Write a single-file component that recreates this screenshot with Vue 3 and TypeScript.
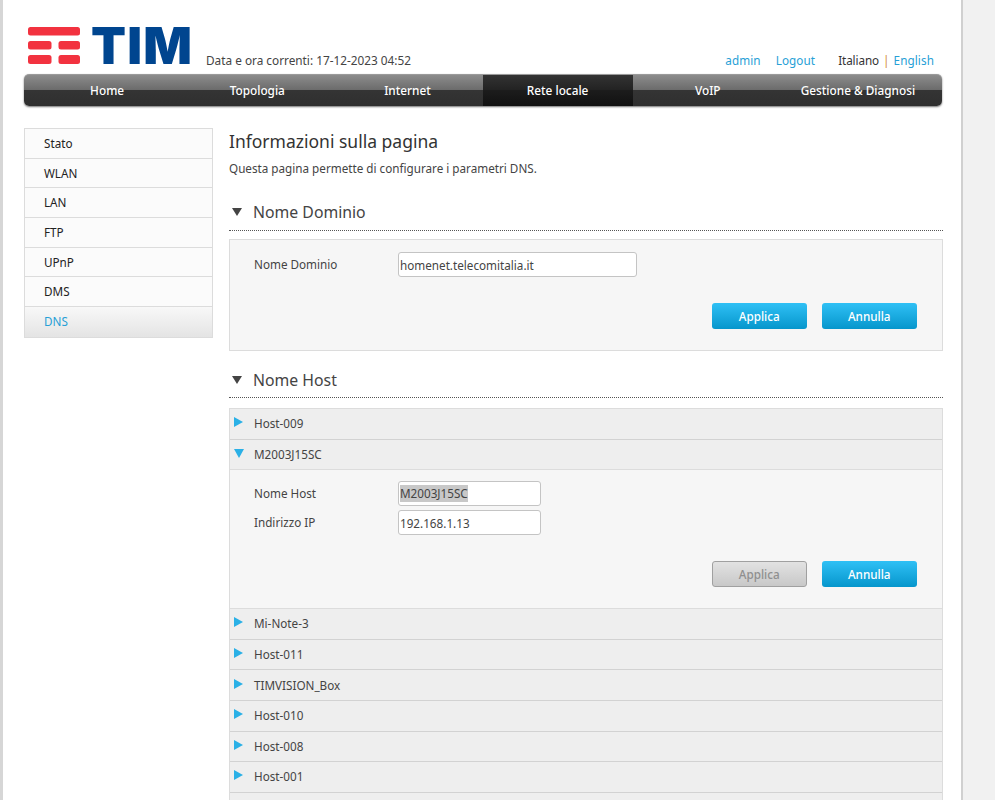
<template>
  <div class="page">
    <!-- Header -->
    <header class="header">
      <div class="logo">
        <svg class="logo-mark" width="52" height="37" viewBox="0 0 52 37">
          <rect x="0" y="0" width="52" height="8.5" rx="2.5" />
          <rect x="0" y="14" width="23.5" height="8.5" rx="2.5" />
          <rect x="30.5" y="14" width="21.5" height="8.5" rx="2.5" />
          <rect x="0" y="28" width="23.5" height="9" rx="2.5" />
          <rect x="30.5" y="28" width="21.5" height="9" rx="2.5" />
        </svg>
        <span class="logo-text">TIM</span>
      </div>
      <div class="datetime">Data e ora correnti: 17-12-2023 04:52</div>
      <div class="user-links">
        <a class="link">admin</a>
        <a class="link logout">Logout</a>
        <span class="lang">Italiano</span>
        <span class="lang-sep">|</span>
        <a class="link">English</a>
      </div>
    </header>

    <!-- Navigation -->
    <nav class="nav">
      <a
        v-for="item in navItems"
        :key="item"
        class="nav-item"
        :class="{ active: item === activeNav }"
      >{{ item }}</a>
    </nav>

    <div class="content">
      <ul class="sidebar">
        <li
          v-for="item in sideItems"
          :key="item"
          class="side-item"
          :class="{ active: item === 'DNS' }"
        >{{ item }}</li>
      </ul>

      <main class="main">
        <h1 class="title">Informazioni sulla pagina</h1>
        <p class="subtitle">Questa pagina permette di configurare i parametri DNS.</p>

        <h2 class="section-title first"><i class="arrow-dark"></i>Nome Dominio</h2>
        <section class="panel domain">
          <div class="field">
            <label class="field-label">Nome Dominio</label>
            <input class="input wide" value="homenet.telecomitalia.it" />
          </div>
          <div class="actions">
            <button class="btn">Applica</button>
            <button class="btn">Annulla</button>
          </div>
        </section>

        <h2 class="section-title second"><i class="arrow-dark"></i>Nome Host</h2>
        <div class="hosts">
          <div v-for="host in hosts" :key="host" class="host">
            <div class="host-head" :class="{ open: host === openHost }">
              <i class="arrow"></i>{{ host }}
            </div>
            <div v-if="host === openHost" class="host-body">
              <div class="field small">
                <label class="field-label">Nome Host</label>
                <div class="input narrow"><span class="selected">{{ host }}</span></div>
              </div>
              <div class="field small">
                <label class="field-label">Indirizzo IP</label>
                <input class="input narrow" value="192.168.1.13" />
              </div>
              <div class="actions">
                <button class="btn disabled">Applica</button>
                <button class="btn">Annulla</button>
              </div>
            </div>
          </div>
          <!-- next row, cut off by the window -->
          <div class="host-head"></div>
        </div>
      </main>
    </div>
  </div>
</template>

<script setup lang="ts">
const navItems = ['Home', 'Topologia', 'Internet', 'Rete locale', 'VoIP', 'Gestione & Diagnosi'];
const activeNav = 'Rete locale';
const sideItems = ['Stato', 'WLAN', 'LAN', 'FTP', 'UPnP', 'DMS', 'DNS'];
const openHost = 'M2003J15SC';
const hosts = [
  'Host-009',
  'M2003J15SC',
  'Mi-Note-3',
  'Host-011',
  'TIMVISION_Box',
  'Host-010',
  'Host-008',
  'Host-001',
];
</script>

<style>
html,
body {
  margin: 0;
  height: 800px;
  overflow: hidden;
  background: #f1f1f1;
}
</style>

<style scoped>
.page {
  box-sizing: border-box;
  width: 963px;
  height: 800px;
  overflow: hidden;
  padding: 0 19px 0 21px;
  background: #fff;
  border-left: 3px solid #d6d6d6;
  border-right: 2px solid #d0d0d0;
  font-family: "Noto Sans", "Open Sans", sans-serif;
  font-size: 11.7px;
  color: #444;
}

.header {
  display: flex;
  align-items: flex-end;
  height: 74px;
  box-sizing: border-box;
  padding-bottom: 6px;
}

.logo {
  display: flex;
  align-items: flex-start;
  height: 37px;
  margin: 0 0 4px 4px;
}

.logo-mark {
  fill: #f2323f;
}

.logo-text {
  margin-left: 11px;
  width: 99px;
  font-family: Inter, "Liberation Sans", sans-serif;
  font-size: 51px;
  font-weight: 900;
  line-height: 37px;
  letter-spacing: 1.2px;
  color: #00458f;
}

.datetime {
  margin-left: 16px;
  font-size: 11.8px;
  line-height: 16px;
}

.user-links {
  margin-left: auto;
  display: flex;
  margin-right: 8px;
  line-height: 16px;
  letter-spacing: 0.1px;
}

.link {
  color: #27a0d6;
}

.logout {
  margin-left: 15px;
}

.lang {
  margin-left: 23px;
  color: #333;
  letter-spacing: -0.1px;
}

.lang-sep {
  margin: 0 4px;
  color: #d08a3a;
}

.nav {
  display: flex;
  box-sizing: border-box;
  width: 918px;
  height: 32px;
  padding: 0 9px 0 8px;
  border-top: 1px solid #9a9a9a;
  border-radius: 5px;
  background: linear-gradient(#8c8c8c 0, #6a6a6a 50%, #343434 50%, #2f2f2f 100%);
  box-shadow: 0 1px 2px rgba(0, 0, 0, 0.55);
}

.nav-item {
  flex: 1;
  text-align: center;
  line-height: 31px;
  font-weight: 500;
  font-size: 11.8px;
  color: #fff;
}

.nav-item.active {
  background: linear-gradient(#333 0, #222 50%, #1c1c1c 50%, #111 100%);
}

.content {
  display: grid;
  grid-template-columns: 188.5px 714px;
  column-gap: 16.5px;
  padding-top: 22px;
}

.sidebar {
  list-style: none;
  margin: 0;
  padding: 0;
  align-self: start;
  border: 1px solid #dcdcdc;
  color: #222;
}

.side-item {
  box-sizing: border-box;
  height: 29.7px;
  padding-left: 19px;
  line-height: 29.6px;
  background: #fbfbfb;
  border-bottom: 1px solid #dcdcdc;
}

.side-item:last-child {
  border-bottom: 0;
}

.side-item.active {
  color: #27a0d6;
  background: linear-gradient(#f8f8f8, #e4e4e4);
}

.title {
  margin: 0;
  font-size: 17.5px;
  font-weight: 400;
  line-height: 26px;
  color: #333;
}

.subtitle {
  margin: 4px 0 0;
  line-height: 20px;
}

.section-title {
  display: flex;
  align-items: center;
  box-sizing: border-box;
  font-size: 15.8px;
  font-weight: 400;
  color: #444;
  border-bottom: 1px dotted #555;
}

.section-title.first {
  height: 37.5px;
  margin: 15px 0 8.5px;
  padding-top: 2px;
}

.section-title.second {
  height: 35px;
  margin: 0 0 10.5px;
}

.arrow-dark {
  width: 0;
  height: 0;
  margin: 0 11px 0 3px;
  border-left: 5.5px solid transparent;
  border-right: 5.5px solid transparent;
  border-top: 8px solid #444;
}

.panel {
  box-sizing: border-box;
  background: #f6f6f6;
  border: 1px solid #dcdcdc;
}

.domain {
  height: 112px;
  margin-bottom: 11.5px;
  padding: 12px 24px 0;
}

.field {
  display: flex;
  align-items: center;
}

.field-label {
  width: 144px;
  flex: none;
  margin-top: -2px;
}

.input {
  box-sizing: border-box;
  height: 25px;
  padding: 0 1px;
  border: 1px solid #c4c4c4;
  border-radius: 3px;
  background: #fff;
  font: inherit;
  line-height: 22px;
  color: #444;
  outline: none;
}

.wide {
  width: 239px;
}

.narrow {
  width: 143px;
}

.selected {
  background: #c8c8c8;
  display: inline-block;
  line-height: 17px;
}

.actions {
  display: flex;
  justify-content: flex-end;
  gap: 14.5px;
  margin: 25.5px 1px 0 0;
}

.btn {
  box-sizing: border-box;
  width: 95.5px;
  height: 26.7px;
  padding: 0;
  border: 0;
  border-radius: 3px;
  background: linear-gradient(#2fc0f5, #0696cc);
  font: inherit;
  font-weight: 500;
  color: #fff;
}

.btn.disabled {
  border: 1px solid #a0a0a0;
  background: linear-gradient(#e2e2e2, #c8c8c8);
  color: #8f8f8f;
}

.hosts {
  border-left: 1px solid #dcdcdc;
  border-right: 1px solid #dcdcdc;
  border-top: 1px solid #dcdcdc;
}

.host-head {
  display: flex;
  align-items: center;
  box-sizing: border-box;
  height: 30.6px;
  padding: 0 0 1px 4px;
  line-height: 14px;
  background: #eeeeee;
  border-bottom: 1.5px solid #d2d2d2;
}

.host-head.open {
  border-bottom: 1px solid #dcdcdc;
}

.arrow {
  width: 0;
  height: 0;
  margin: -2px 11px 0 0;
  border-top: 5px solid transparent;
  border-bottom: 5px solid transparent;
  border-left: 9px solid #2ab0e6;
}

.open .arrow {
  margin: 0 10px 0 0;
  border-left: 5px solid transparent;
  border-right: 5px solid transparent;
  border-bottom: 0;
  border-top: 9px solid #2ab0e6;
}

.host-body {
  box-sizing: border-box;
  height: 139px;
  padding: 11px 24px 0;
  background: #f6f6f6;
  border-bottom: 1px solid #dcdcdc;
}

.small {
  margin-bottom: 4px;
}
</style>
